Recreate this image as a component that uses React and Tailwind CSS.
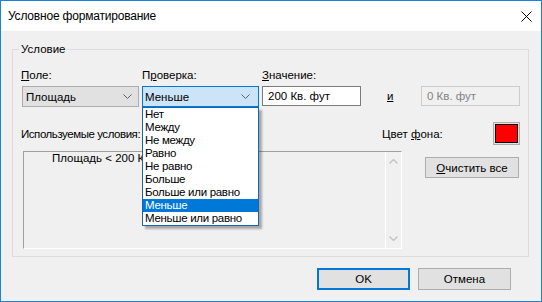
import React from "react";

const Chevron = ({ color = "#606060" }) => (
  <svg width="9" height="5" viewBox="0 0 9 5">
    <polyline points="0.5,0.5 4.5,4.5 8.5,0.5" fill="none" stroke={color} strokeWidth="1" />
  </svg>
);

const UpArrow = () => (
  <svg width="9" height="5" viewBox="0 0 9 5">
    <polyline points="0.5,4.5 4.5,0.5 8.5,4.5" fill="none" stroke="#c0c0c0" strokeWidth="1.2" />
  </svg>
);
const DownArrow = () => (
  <svg width="9" height="5" viewBox="0 0 9 5">
    <polyline points="0.5,0.5 4.5,4.5 8.5,0.5" fill="none" stroke="#c0c0c0" strokeWidth="1.2" />
  </svg>
);

const items = [
  "Нет",
  "Между",
  "Не между",
  "Равно",
  "Не равно",
  "Больше",
  "Больше или равно",
  "Меньше",
  "Меньше или равно",
];

export default function App() {
  return (
    <div className="w-[542px] h-[302px] border border-[#1883d7] flex flex-col font-['Liberation_Sans',Arial,sans-serif] text-[11.5px] text-black bg-[#f0f0f0] overflow-hidden">
      <div className="h-[30px] shrink-0 bg-white flex items-center justify-between pl-[7px] pr-[9px]">
        <span className="leading-[14px] text-[12px] tracking-[-0.2px]">Условное форматирование</span>
        <svg width="11" height="11" viewBox="0 0 11 11">
          <path d="M0.5 0.5 L10.5 10.5 M10.5 0.5 L0.5 10.5" stroke="#000" strokeWidth="1" fill="none" />
        </svg>
      </div>

      <div className="flex-1 flex flex-col pl-[11px] pr-[12px] pt-[18px]">
        <div className="relative w-[517px] h-[208px] border border-[#dcdcdc] pl-[8px] pt-[18px]">
          <span className="absolute left-[6px] top-[-8px] px-[2px] bg-[#f0f0f0] leading-[14px]">
            Условие
          </span>

          <div className="flex leading-[14px]">
            <span className="w-[121px]">
              <u>П</u>оле:
            </span>
            <span className="w-[120px]">
              П<u>р</u>оверка:
            </span>
            <span>
              <u>З</u>начение:
            </span>
          </div>

          <div className="flex items-start mt-[4px]">
            <div className="ml-[1px] w-[117px] h-[21px] border border-[#adadad] bg-[#e1e1e1] flex items-center justify-between pl-[3px] pr-[6px] leading-[14px]">
              <span>Площадь</span>
              <Chevron />
            </div>
            <div className="relative ml-[3px] w-[117px] h-[21px]">
              <div className="w-full h-full border border-[#0078d7] bg-[#cce4f7] flex items-center justify-between pl-[2px] pr-[8px] leading-[14px]">
                <span>Меньше</span>
                <Chevron />
              </div>
              <div className="absolute left-0 top-[21px] w-[117px] border border-[#1466b0] bg-white shadow-[3px_3px_2px_rgba(0,0,0,0.3)] z-10 tracking-[-0.3px]">
                {items.map((t) => (
                  <div
                    key={t}
                    className={
                      t === "Меньше"
                        ? "h-[13px] leading-[13px] pl-[2px] bg-[#0078d7] text-white"
                        : "h-[13px] leading-[13px] pl-[2px]"
                    }
                  >
                    {t}
                  </div>
                ))}
              </div>
            </div>
            <div className="ml-[3px] w-[99px] h-[20px] border border-[#7a7a7a] bg-white flex items-center pl-[5px] leading-[14px]">
              200 Кв. фут
            </div>
            <span className="ml-[26px] w-[7px] leading-[20px]">
              <u>и</u>
            </span>
            <div className="ml-[27px] w-[99px] h-[20px] border border-[#cccccc] bg-[#f0f0f0] flex items-center pl-[5px] leading-[14px] text-[#838383]">
              0 Кв. фут
            </div>
          </div>

          <div className="flex items-center mt-[15px] h-[23px] leading-[14px]">
            <span className="w-[361px] tracking-[-0.45px]">Используемые условия:</span>
            <span className="w-[111px]">
              Цвет <u>ф</u>она:
            </span>
            <div className="w-[27px] h-[23px] border border-[#adadad] bg-[#e1e1e1] p-[1px]">
              <div className="w-full h-full border border-black bg-[#ff0000]" />
            </div>
          </div>

          <div className="flex items-start mt-[6px]">
            <div className="ml-[2px] w-[379px] h-[98px] border-t border-l border-t-[#a0a0a0] border-l-[#a0a0a0] border-r border-b border-r-white border-b-white flex">
              <div className="flex-1 pl-[28px] leading-[13px]">Площадь &lt; 200 Кв. фут</div>
              <div className="w-[16px] border-l border-white flex flex-col items-center justify-between pt-[7px] pb-[7px]">
                <UpArrow />
                <DownArrow />
              </div>
            </div>
            <div className="ml-[23px] mt-[6px] w-[94px] h-[21px] border border-[#adadad] bg-[#e1e1e1] flex items-center justify-center leading-[14px]">
              <span>
                <u>О</u>чистить все
              </span>
            </div>
          </div>
        </div>

        <div className="flex justify-end mt-[11px] pr-[18px]">
          <div className="w-[93px] h-[22px] border-2 border-[#0078d7] bg-[#e1e1e1] flex items-center justify-center leading-[14px]">
            OK
          </div>
          <div className="ml-[8px] w-[93px] h-[22px] border border-[#adadad] bg-[#e1e1e1] flex items-center justify-center leading-[14px]">
            Отмена
          </div>
        </div>
      </div>
    </div>
  );
}
